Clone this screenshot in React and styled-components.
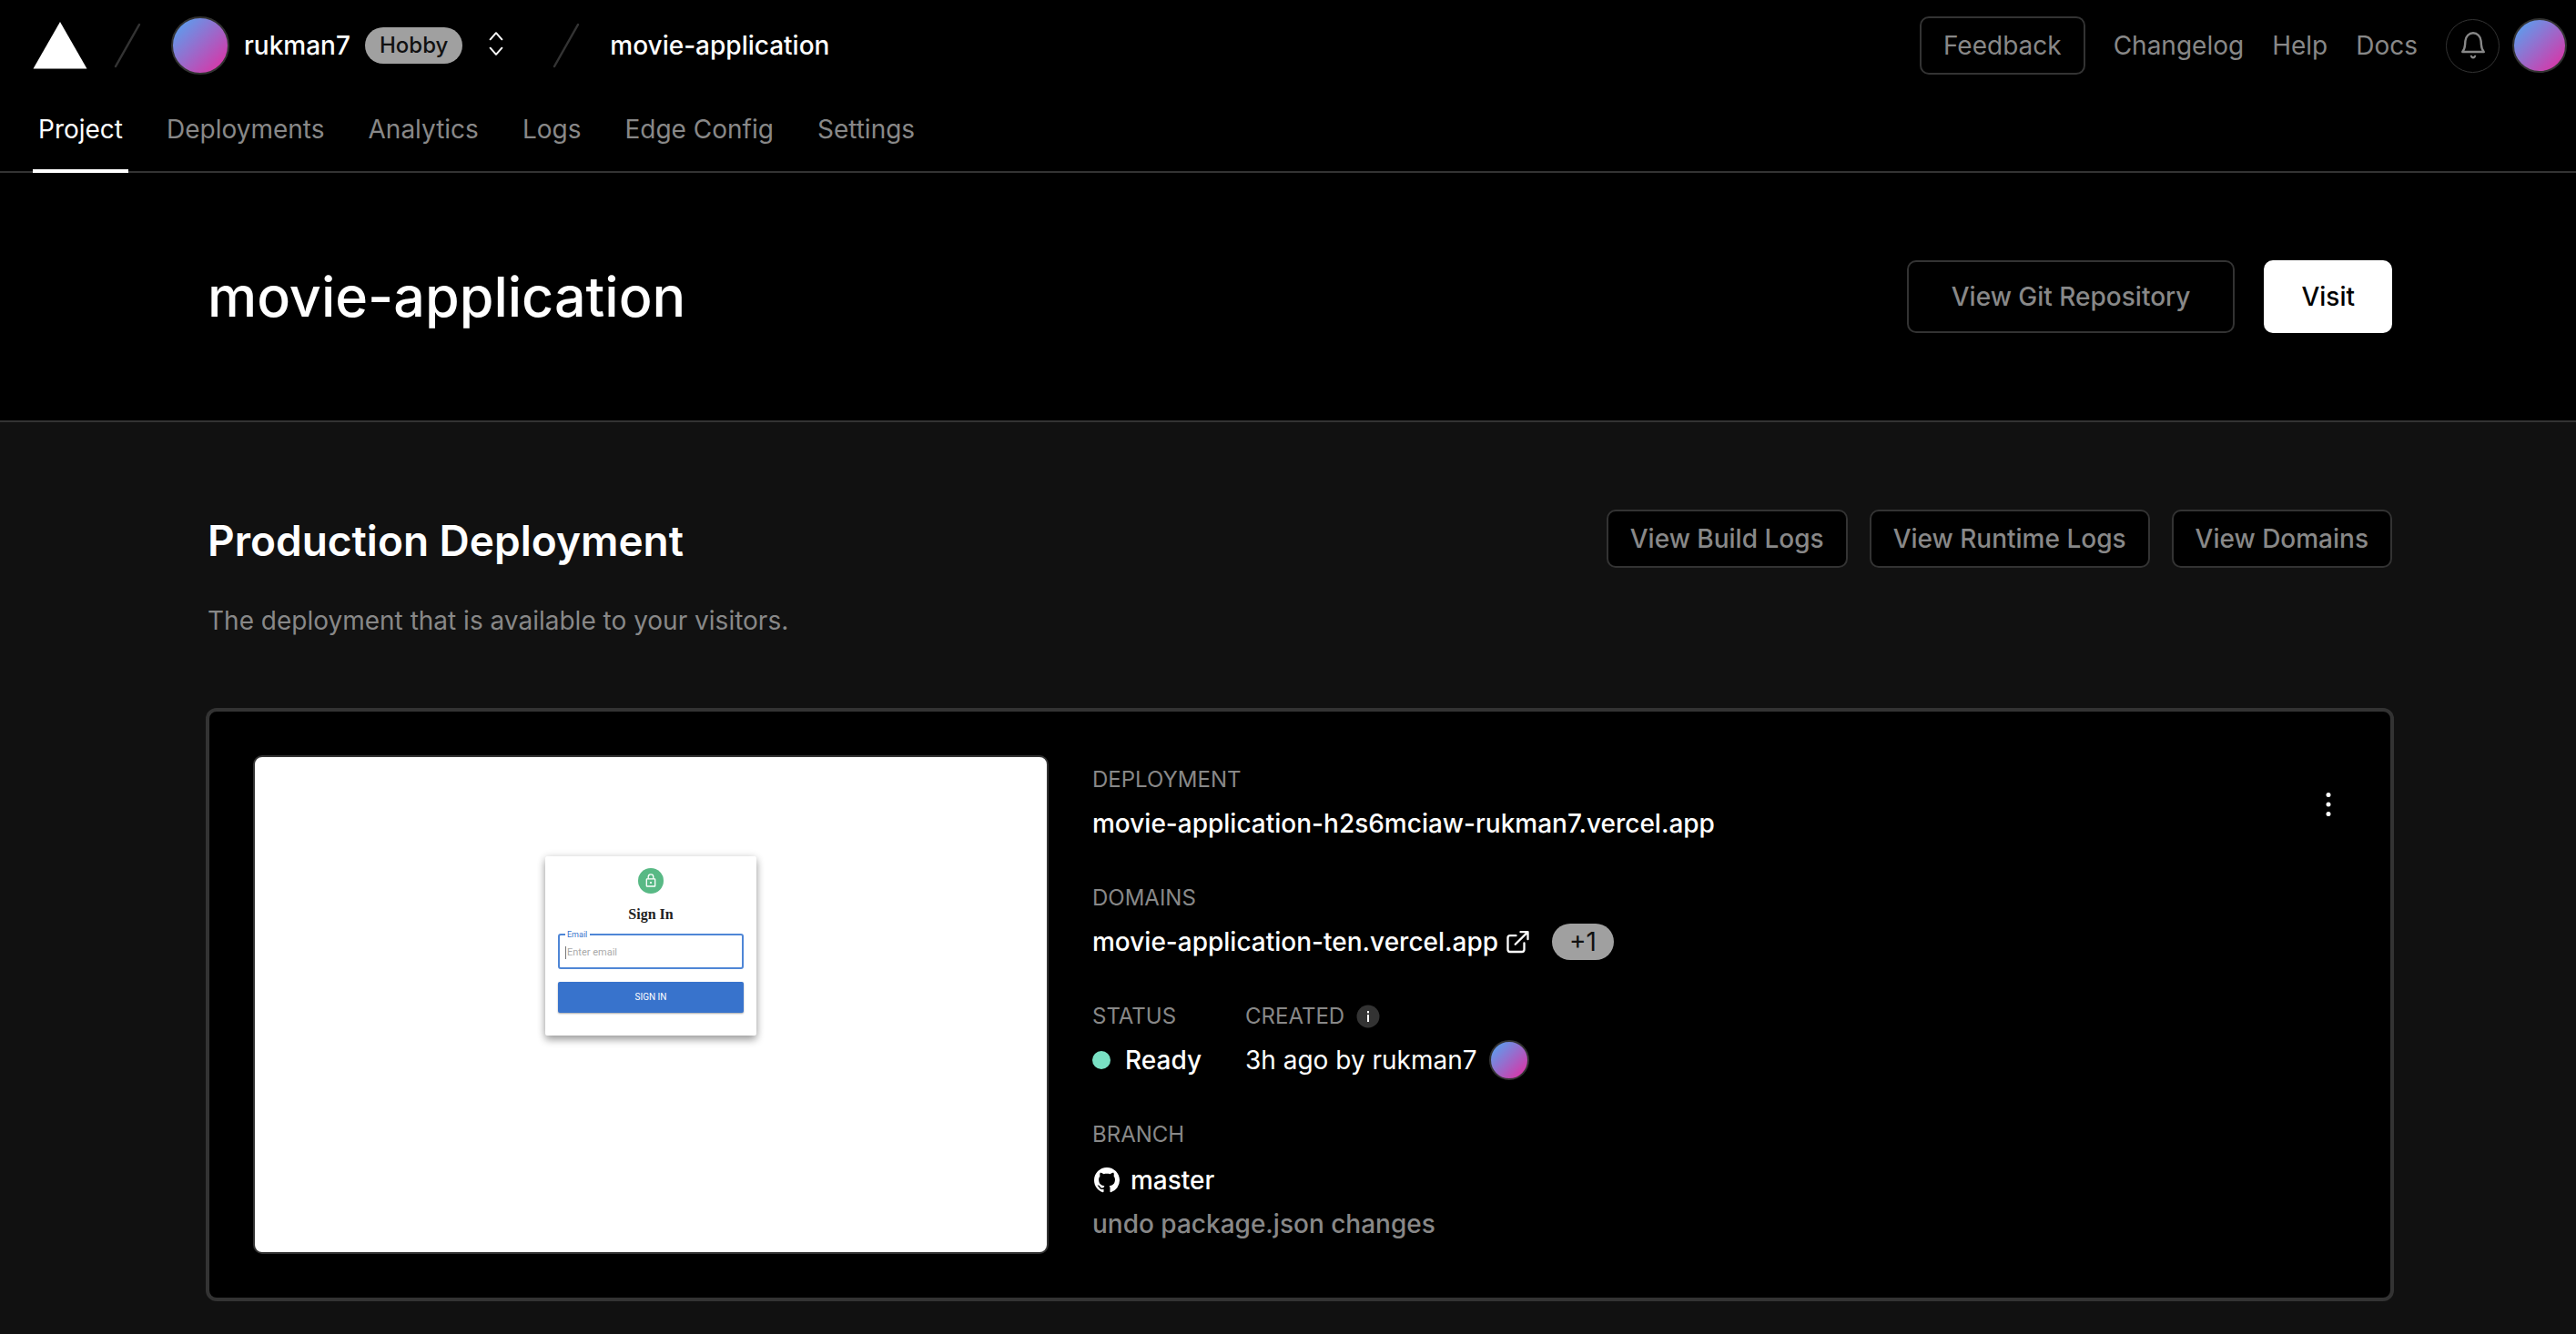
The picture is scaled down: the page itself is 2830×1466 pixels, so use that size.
import React from 'react';
import styled, { createGlobalStyle } from 'styled-components';

const GlobalStyle = createGlobalStyle`
  *, *::before, *::after { box-sizing: border-box; }
  body {
    margin: 0;
    background: #111;
    color: #fff;
    font-family: Inter, "Liberation Sans", sans-serif;
    font-size: 28px;
    line-height: 44px;
    -webkit-font-smoothing: antialiased;
  }
  a { color: inherit; text-decoration: none; }
  button, input { font: inherit; }
  h1, h2, p, dl, dt, dd { margin: 0; }
  svg { display: block; flex: none; }
`;

const Header = styled.header`
  background: #000;
  border-bottom: 2px solid #333;
`;

const TopBar = styled.div`
  display: flex;
  align-items: center;
  justify-content: space-between;
  height: 100px;
  padding: 0 10px 0 36px;
`;

const Crumbs = styled.nav`
  display: flex;
  align-items: center;
`;

const LogoLink = styled.a`
  margin-right: 28px;
`;

const Avatar = styled.span`
  display: block;
  flex: none;
  width: ${(p) => p.$size}px;
  height: ${(p) => p.$size}px;
  border: 2px solid #333;
  border-radius: 50%;
  background: linear-gradient(135deg, #4ea9f5 0%, #9370cf 45%, #e62a9f 100%);
`;

const Account = styled.a`
  display: flex;
  align-items: center;
  margin-left: 32px;
  font-weight: 500;
`;

const AccountName = styled.span`
  margin: 0 16px;
`;

const Badge = styled.span`
  display: inline-flex;
  align-items: center;
  height: 40px;
  padding: 0 ${(p) => (p.$large ? 19 : 16)}px;
  border-radius: 20px;
  background: #a0a0a0;
  color: #111;
  font-size: ${(p) => (p.$large ? 28 : 24)}px;
  font-weight: ${(p) => (p.$large ? 400 : 500)};
`;

const Switcher = styled.button`
  display: flex;
  margin: 0 51px 0 27px;
  padding: 0;
  border: 0;
  background: none;
  color: #fff;
`;

const ProjectLink = styled.a`
  margin-left: 32px;
  font-weight: 500;
`;

const TopLinks = styled.nav`
  display: flex;
  align-items: center;
  gap: 31px;
  color: #888;
`;

const UserTools = styled.div`
  display: flex;
  align-items: center;
  gap: 14px;
`;

const BellButton = styled.button`
  display: flex;
  align-items: center;
  justify-content: center;
  width: 59px;
  height: 59px;
  padding: 0;
  border: 1px solid #333;
  border-radius: 50%;
  background: #000;
  color: #888;
`;

const Tabs = styled.nav`
  display: flex;
  gap: 36px;
  height: 90px;
  margin-bottom: -2px;
  padding: 0 36px;
`;

const Tab = styled.a`
  padding: 20px 6px 0;
  border-bottom: 4px solid ${(p) => (p.$active ? '#fff' : 'transparent')};
  color: ${(p) => (p.$active ? '#fff' : '#888')};
`;

const Button = styled.button`
  height: ${(p) => (p.$large ? 80 : 64)}px;
  padding: 0 ${(p) => p.$pad || 24}px;
  border: 2px solid ${(p) => (p.$primary ? '#fff' : '#333')};
  border-radius: 10px;
  background: ${(p) => (p.$primary ? '#fff' : '#000')};
  color: ${(p) => (p.$primary ? '#000' : '#888')};
  font-weight: ${(p) => (p.$light ? 400 : 500)};
  white-space: nowrap;
`;

const Hero = styled.section`
  background: #000;
  border-bottom: 2px solid #333;
`;

const Container = styled.div`
  max-width: 2522px;
  margin: 0 auto;
  padding: 96px 48px ${(p) => p.$bottom}px 74px;
`;

const HeadRow = styled.div`
  display: flex;
  align-items: ${(p) => p.$align};
  justify-content: space-between;
`;

const ButtonRow = styled.div`
  display: flex;
  gap: ${(p) => p.$gap}px;
`;

const Title = styled.h1`
  font-size: 61px;
  line-height: 80px;
  font-weight: 500;
`;

const SectionTitle = styled.h2`
  font-size: 46px;
  line-height: 68px;
  font-weight: 600;
`;

const Subtitle = styled.p`
  margin: 32px 0 76px;
  color: #888;
`;

const Card = styled.section`
  display: flex;
  gap: 48px;
  padding: 48px;
  border: 2px solid #333;
  border-radius: 10px;
  box-shadow: 0 0 0 2px #333;
  background: #000;
`;

const Preview = styled.div`
  display: flex;
  justify-content: center;
  flex: none;
  width: 874px;
  height: 548px;
  padding-top: 109px;
  border: 2px solid #333;
  border-radius: 10px;
  background: #fff;
`;

const SignInForm = styled.form`
  display: flex;
  flex-direction: column;
  align-items: center;
  align-self: flex-start;
  width: 232px;
  height: 197px;
  padding: 13px 14px;
  border-radius: 2px;
  background: #fff;
  box-shadow: 0 5px 8px rgba(0, 0, 0, 0.3), 0 1px 10px rgba(0, 0, 0, 0.16);
  font-family: Roboto, sans-serif;
`;

const SignInTitle = styled.h2`
  margin-top: 12px;
  color: #222;
  font-family: "Liberation Serif", serif;
  font-size: 16px;
  line-height: 22px;
  font-weight: 700;
`;

const Field = styled.fieldset`
  width: 100%;
  height: 42px;
  margin: 7px 0 14px;
  padding: 0 6px;
  border: 2px solid #4f86d6;
  border-radius: 3px;
`;

const FieldLabel = styled.legend`
  padding: 0 3px 0 2px;
  color: #3873cc;
  font-size: 9px;
  line-height: 8px;
`;

const EmailInput = styled.input`
  display: block;
  width: 100%;
  height: 14px;
  margin-top: 9px;
  padding: 0 0 0 1px;
  border: 0;
  border-left: 1px solid #777;
  outline: 0;
  background: none;
  color: #222;
  font-size: 11px;
  line-height: 14px;
  &::placeholder { color: #aaa; opacity: 1; }
`;

const SignInButton = styled.button`
  width: 100%;
  height: 34px;
  padding: 0;
  border: 0;
  border-radius: 2px;
  background: #3873cc;
  box-shadow: 0 1px 2px rgba(0, 0, 0, 0.35);
  color: #fff;
  font-size: 10px;
  line-height: 14px;
`;

const Details = styled.dl`
  display: flex;
  flex: 1;
  flex-direction: column;
  gap: 44px;
  padding-top: 11px;
`;

const DetailRow = styled.div`
  display: flex;
  gap: 48px;
`;

const Label = styled.dt`
  display: flex;
  align-items: center;
  gap: 13px;
  margin-bottom: 10px;
  color: #888;
  font-size: 24px;
  line-height: 32px;
`;

const Value = styled.dd`
  display: flex;
  align-items: center;
  gap: ${(p) => p.$gap || 0}px;
  min-height: ${(p) => (p.$tall ? 48 : 44)}px;
  color: ${(p) => (p.$muted ? '#888' : '#fff')};
  font-weight: ${(p) => (p.$regular ? 400 : 500)};
`;

const DomainLink = styled.a`
  display: flex;
  align-items: center;
  gap: 7px;
`;

const Dot = styled.span`
  width: 20px;
  height: 20px;
  border-radius: 50%;
  background: #79e1c4;
`;

const Menu = styled.div`
  padding-top: 34px;
`;

const MenuButton = styled.button`
  display: flex;
  align-items: center;
  justify-content: center;
  width: 40px;
  height: 40px;
  padding: 0;
  border: 0;
  background: none;
  color: #fff;
`;

const Slash = () => (
  <svg width="32" height="52" viewBox="0 0 32 52" fill="none" stroke="#333" strokeWidth="2.5" strokeLinecap="round" aria-hidden="true">
    <path d="M29 3L3 49" />
  </svg>
);

const Logo = () => (
  <svg width="60" height="52" viewBox="0 0 60 52" fill="#fff" aria-hidden="true">
    <path d="M30 0L59.5 51.5H.5z" />
  </svg>
);

const UpDown = () => (
  <svg width="20" height="32" viewBox="0 0 20 32" fill="none" stroke="currentColor" strokeWidth="2" strokeLinecap="round" strokeLinejoin="round" aria-hidden="true">
    <path d="M3.600 9.300L10 2.200l6.400 7.100M3.600 18.700l6.400 7.100 6.400-7.100" />
  </svg>
);

const Bell = () => (
  <svg width="32" height="32" viewBox="0 0 32 32" fill="none" aria-hidden="true">
    <path d="M4.200 23h23.600c-1.900-2-2.600-4.500-2.900-8l-.3-4C24.100 6 20.600 2.300 16 2.300S7.900 6 7.400 11l-.3 4c-.3 3.500-1 6-2.900 8z" stroke="currentColor" strokeWidth="2.400" strokeLinejoin="round" />
    <path d="M12.700 26.800h1.900c.3.900.7 1.200 1.400 1.200s1.100-.3 1.400-1.200h1.900c-.2 2.200-1.500 3.700-3.300 3.700s-3.100-1.500-3.300-3.700z" fill="currentColor" />
  </svg>
);

const External = () => (
  <svg width="28" height="28" viewBox="0 0 28 28" fill="none" stroke="currentColor" strokeWidth="2.300" strokeLinecap="round" strokeLinejoin="round" aria-hidden="true">
    <path d="M21.500 15.500v7a2.500 2.500 0 0 1-2.500 2.500H6a2.500 2.500 0 0 1-2.500-2.500V9.700A2.500 2.500 0 0 1 6 7.200h6.500M17.500 3.200h8v8M11.700 16.800L25.300 3.400" />
  </svg>
);

const Info = () => (
  <svg width="26" height="26" viewBox="0 0 26 26" aria-hidden="true">
    <circle cx="13" cy="13" r="12.500" fill="#333" />
    <rect x="12" y="7" width="2" height="2.400" fill="#fff" />
    <rect x="12" y="11" width="2" height="8" fill="#fff" />
  </svg>
);

const GitHub = () => (
  <svg width="32" height="28" viewBox="-1 0 18 16" fill="currentColor" aria-hidden="true">
    <path d="M8 0C3.580 0 0 3.580 0 8c0 3.540 2.290 6.530 5.470 7.590.4.070.55-.17.55-.38 0-.19-.01-.82-.01-1.490-2.010.37-2.530-.49-2.690-.94-.09-.23-.48-.94-.82-1.130-.28-.15-.68-.52-.01-.53.63-.01 1.080.58 1.230.82.72 1.210 1.870.87 2.330.66.07-.52.28-.87.51-1.070-1.780-.2-3.640-.89-3.640-3.950 0-.87.31-1.590.82-2.150-.08-.2-.36-1.020.08-2.120 0 0 .67-.21 2.200.82.64-.18 1.320-.27 2-.27s1.360.09 2 .27c1.530-1.040 2.200-.82 2.200-.82.44 1.100.16 1.920.08 2.120.51.56.82 1.270.82 2.150 0 3.070-1.870 3.750-3.650 3.950.29.25.54.73.54 1.480 0 1.070-.01 1.930-.01 2.200 0 .21.15.46.55.38A8.010 8.010 0 0 0 16 8c0-4.420-3.580-8-8-8z" />
  </svg>
);

const LockBadge = () => (
  <svg width="28" height="28" viewBox="0 0 28 28" fill="none" stroke="#fff" strokeWidth="1.300" aria-hidden="true">
    <circle cx="14" cy="14" r="14" fill="#58b985" stroke="none" />
    <rect x="9.300" y="11.800" width="9.400" height="8.200" rx=".6" />
    <path d="M11.200 11.800V9.700a2.800 2.800 0 0 1 5.600 0v2.100" />
    <circle cx="14" cy="16" r="1.100" fill="#fff" stroke="none" />
  </svg>
);

const Kebab = () => (
  <svg width="28" height="28" viewBox="0 0 28 28" fill="currentColor" aria-hidden="true">
    <circle cx="14" cy="3.500" r="2.500" />
    <circle cx="14" cy="14" r="2.500" />
    <circle cx="14" cy="24.500" r="2.500" />
  </svg>
);

const tabs = ['Project', 'Deployments', 'Analytics', 'Logs', 'Edge Config', 'Settings'];

export default function App() {
  return (
    <>
      <GlobalStyle />
      <Header>
        <TopBar>
          <Crumbs aria-label="Breadcrumb">
            <LogoLink href="#" aria-label="Home"><Logo /></LogoLink>
            <Slash />
            <Account href="#">
              <Avatar $size={64} />
              <AccountName>rukman7</AccountName>
              <Badge>Hobby</Badge>
            </Account>
            <Switcher type="button" aria-label="Switch account"><UpDown /></Switcher>
            <Slash />
            <ProjectLink href="#">movie-application</ProjectLink>
          </Crumbs>
          <TopLinks aria-label="Resources">
            <Button type="button" $light>Feedback</Button>
            <a href="#">Changelog</a>
            <a href="#">Help</a>
            <a href="#">Docs</a>
            <UserTools>
              <BellButton type="button" aria-label="Notifications"><Bell /></BellButton>
              <Avatar $size={60} />
            </UserTools>
          </TopLinks>
        </TopBar>
        <Tabs aria-label="Project pages">
          {tabs.map((name, i) => (
            <Tab key={name} href="#" $active={i === 0}>{name}</Tab>
          ))}
        </Tabs>
      </Header>

      <main>
        <Hero>
          <Container $bottom={96}>
            <HeadRow $align="center">
              <Title>movie-application</Title>
              <ButtonRow $gap={32}>
                <Button type="button" $large $pad={47}>View Git Repository</Button>
                <Button type="button" $large $pad={39} $primary>Visit</Button>
              </ButtonRow>
            </HeadRow>
          </Container>
        </Hero>

        <Container $bottom={36}>
          <HeadRow $align="flex-start">
            <SectionTitle>Production Deployment</SectionTitle>
            <ButtonRow $gap={24}>
              <Button type="button">View Build Logs</Button>
              <Button type="button">View Runtime Logs</Button>
              <Button type="button">View Domains</Button>
            </ButtonRow>
          </HeadRow>
          <Subtitle>The deployment that is available to your visitors.</Subtitle>

          <Card>
            <Preview>
              <SignInForm onSubmit={(e) => e.preventDefault()}>
                <LockBadge />
                <SignInTitle>Sign In</SignInTitle>
                <Field>
                  <FieldLabel><label htmlFor="email">Email</label></FieldLabel>
                  <EmailInput id="email" type="email" placeholder="Enter email" />
                </Field>
                <SignInButton type="submit">SIGN IN</SignInButton>
              </SignInForm>
            </Preview>

            <Details>
              <div>
                <Label>DEPLOYMENT</Label>
                <Value><a href="#">movie-application-h2s6mciaw-rukman7.vercel.app</a></Value>
              </div>
              <div>
                <Label>DOMAINS</Label>
                <Value $gap={24}>
                  <DomainLink href="#">movie-application-ten.vercel.app<External /></DomainLink>
                  <Badge $large>+1</Badge>
                </Value>
              </div>
              <DetailRow>
                <div>
                  <Label>STATUS</Label>
                  <Value $gap={16}><Dot />Ready</Value>
                </div>
                <div>
                  <Label>CREATED<Info /></Label>
                  <Value $gap={13} $regular>3h ago by rukman7<Avatar $size={44} /></Value>
                </div>
              </DetailRow>
              <div>
                <Label>BRANCH</Label>
                <Value $gap={10} $tall><GitHub />master</Value>
                <Value $tall $muted>undo package.json changes</Value>
              </div>
            </Details>

            <Menu>
              <MenuButton type="button" aria-label="Deployment menu"><Kebab /></MenuButton>
            </Menu>
          </Card>
        </Container>
      </main>
    </>
  );
}
